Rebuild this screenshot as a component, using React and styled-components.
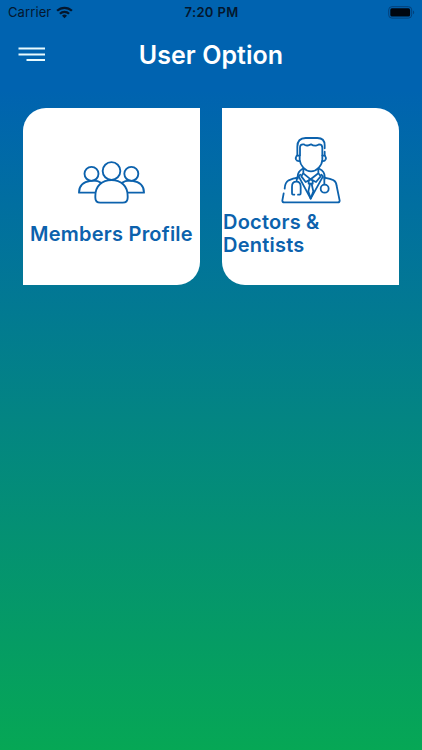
import React from "react";
import styled, { createGlobalStyle } from "styled-components";

const GlobalStyle = createGlobalStyle`
  * {
    box-sizing: border-box;
  }

  body {
    margin: 0;
    font-family: Inter, "Liberation Sans", sans-serif;
  }
`;

const Screen = styled.main`
  width: 100%;
  height: 100vh;
  overflow: hidden;
  background: linear-gradient(180deg, #0063b0 0, #0063b0 90px, #06a755 100%);
`;

const StatusBar = styled.div`
  display: grid;
  grid-template-columns: 1fr auto 1fr;
  align-items: center;
  height: 24px;
  padding: 0 7px 0 8px;
  color: #04172e;
`;

const Carrier = styled.div`
  display: flex;
  align-items: center;
  gap: 5px;
  font-size: 13px;
  letter-spacing: 0.1px;
`;

const Clock = styled.time`
  font-size: 13px;
  font-weight: 600;
  letter-spacing: 0.35px;
`;

const Battery = styled.svg`
  justify-self: end;
`;

const Header = styled.header`
  display: grid;
  grid-template-columns: 28px 1fr 28px;
  align-items: center;
  height: 60px;
  padding: 0 18px;
`;

const MenuButton = styled.button`
  display: flex;
  padding: 0;
  border: none;
  background: none;
  cursor: pointer;
`;

const Title = styled.h1`
  margin: 1px 0 0;
  color: #fff;
  font-size: 25px;
  font-weight: 600;
  line-height: 30px;
  letter-spacing: 0.05px;
  text-align: center;
`;

const Options = styled.section`
  display: grid;
  grid-template-columns: repeat(2, 177px);
  justify-content: center;
  gap: 22px;
  margin-top: 24px;
`;

const Card = styled.button`
  display: flex;
  flex-direction: column;
  align-items: center;
  height: 177px;
  padding: ${({ $top }) => $top}px 0 0;
  border: none;
  border-radius: ${({ $mirrored }) => ($mirrored ? "0 23px 0 23px" : "23px 0 23px 0")};
  background: #fff;
  color: #0c62ad;
  font-family: inherit;
  cursor: pointer;
`;

const CardIcon = styled.svg`
  flex: none;
  fill: none;
  stroke: #0c62ad;
  stroke-linecap: round;
  stroke-linejoin: round;
`;

const CardLabel = styled.span`
  width: 100%;
  margin-top: ${({ $gap }) => $gap}px;
  padding-left: ${({ $align }) => ($align === "left" ? 1 : 0)}px;
  font-size: 20px;
  font-weight: 600;
  line-height: 23.5px;
  letter-spacing: 0.23px;
  text-align: ${({ $align }) => $align};
`;

function WifiIcon() {
  return (
    <svg width="17" height="13" viewBox="0 0 17 13" fill="none" stroke="#04172e" strokeWidth="2.3">
      <path d="M1.1 4.8a10.6 10.6 0 0 1 14.8 0" />
      <path d="M3.9 7.7a6.6 6.6 0 0 1 9.2 0" />
      <path d="M8.5 12.3 6 9.8a3.6 3.6 0 0 1 5 0z" fill="#04172e" stroke="none" />
    </svg>
  );
}

function BatteryIcon() {
  return (
    <Battery width="27" height="13" viewBox="0 0 27 13">
      <rect x="0.7" y="0.7" width="23" height="11.4" rx="3.2" fill="none" stroke="#03417a" />
      <rect x="2.3" y="2.3" width="19.8" height="8.2" rx="1.6" fill="#00060f" />
      <path d="M25 4.5c1.6 0.6 1.6 3.2 0 3.8z" fill="#03417a" />
    </Battery>
  );
}

function MembersIcon() {
  return (
    <CardIcon width="67" height="43" viewBox="24 33 201 129" strokeWidth="5.6">
      <circle cx="124.5" cy="63" r="26.5" />
      <circle cx="64.5" cy="71.5" r="21" />
      <circle cx="184" cy="71.5" r="21" />
      <path d="M76 138c0-31 20-47.5 48.5-47.5S173 107 173 138v5q0 15-15 15H91q-15 0-15-15z" />
      <path d="M93 98C84 92 72 91 62 92.5 40 95 27 108 27 128h48" />
      <path d="M156 98c9-6 21-7 31-5.5 22 2.5 35 15.5 35 35.5h-48" />
    </CardIcon>
  );
}

function DoctorIcon() {
  return (
    <CardIcon width="60" height="68" viewBox="33 18 180 204" strokeWidth="5.4">
      {/* hair and face */}
      <path d="M82 76V50q0-25 25-26h35q22 0 22 22v9M164 65v11" />
      <path d="M90 76V52q0-9 9-9h3q5 5 13 3l8-3q7 5 15 4 7-1 9-4 10 0 10 10v23" />
      <path d="M89 77v13c2 17 17 34 34 34s33-17 34-34V77" />
      <path d="M88 77h-8q-4 6-2 11 3 6 11 5M158 77h7q4 6 2 11-3 6-10 5" />
      {/* coat */}
      <path d="M44 176q1-19 12-25 13-6 27-8M163 143q19 3 28 8 8 4 9 17l9 44q0 5-6 5H43q-6 0-6-5l4-22" />
      <path d="M97 117c-7 4-14 13-14 23v6M149 117c8 4 15 13 15 23v6" />
      <path d="M100 115v15l22 18 23-18v-15M91 134l-5 5 36 67 37-67-5-5" />
      <path d="M98 132 94 139l13 17 15-8 16 8 14-17-5-7" />
      <path d="M116 151v10h12v-10M120 162l-5 22 7 22 8-22-5-22" />
      {/* stethoscope */}
      <path d="M73 194h-4q-3 0-3-4v-20q0-15 13-15t13 15v20q0 4-3 4h-5M80 143v11M163 143v20" />
      <circle cx="164" cy="176" r="12" />
    </CardIcon>
  );
}

export default function App() {
  return (
    <>
      <GlobalStyle />
      <Screen>
        <StatusBar>
          <Carrier>
            Carrier
            <WifiIcon />
          </Carrier>
          <Clock>7:20 PM</Clock>
          <BatteryIcon />
        </StatusBar>
        <Header>
          <MenuButton aria-label="Menu">
            <svg width="28" height="16" viewBox="0 0 28 16" stroke="#e8fbff" strokeWidth="1.8">
              <path d="M0.5 2.5h26.5M0.5 8.5h26.5M8.5 14h18.5" />
            </svg>
          </MenuButton>
          <Title>User Option</Title>
        </Header>
        <Options>
          <Card $top={53}>
            <MembersIcon />
            <CardLabel $gap={18.5} $align="center">Members Profile</CardLabel>
          </Card>
          <Card $top={28} $mirrored>
            <DoctorIcon />
            <CardLabel $gap={6.5} $align="left">Doctors &amp; Dentists</CardLabel>
          </Card>
        </Options>
      </Screen>
    </>
  );
}
